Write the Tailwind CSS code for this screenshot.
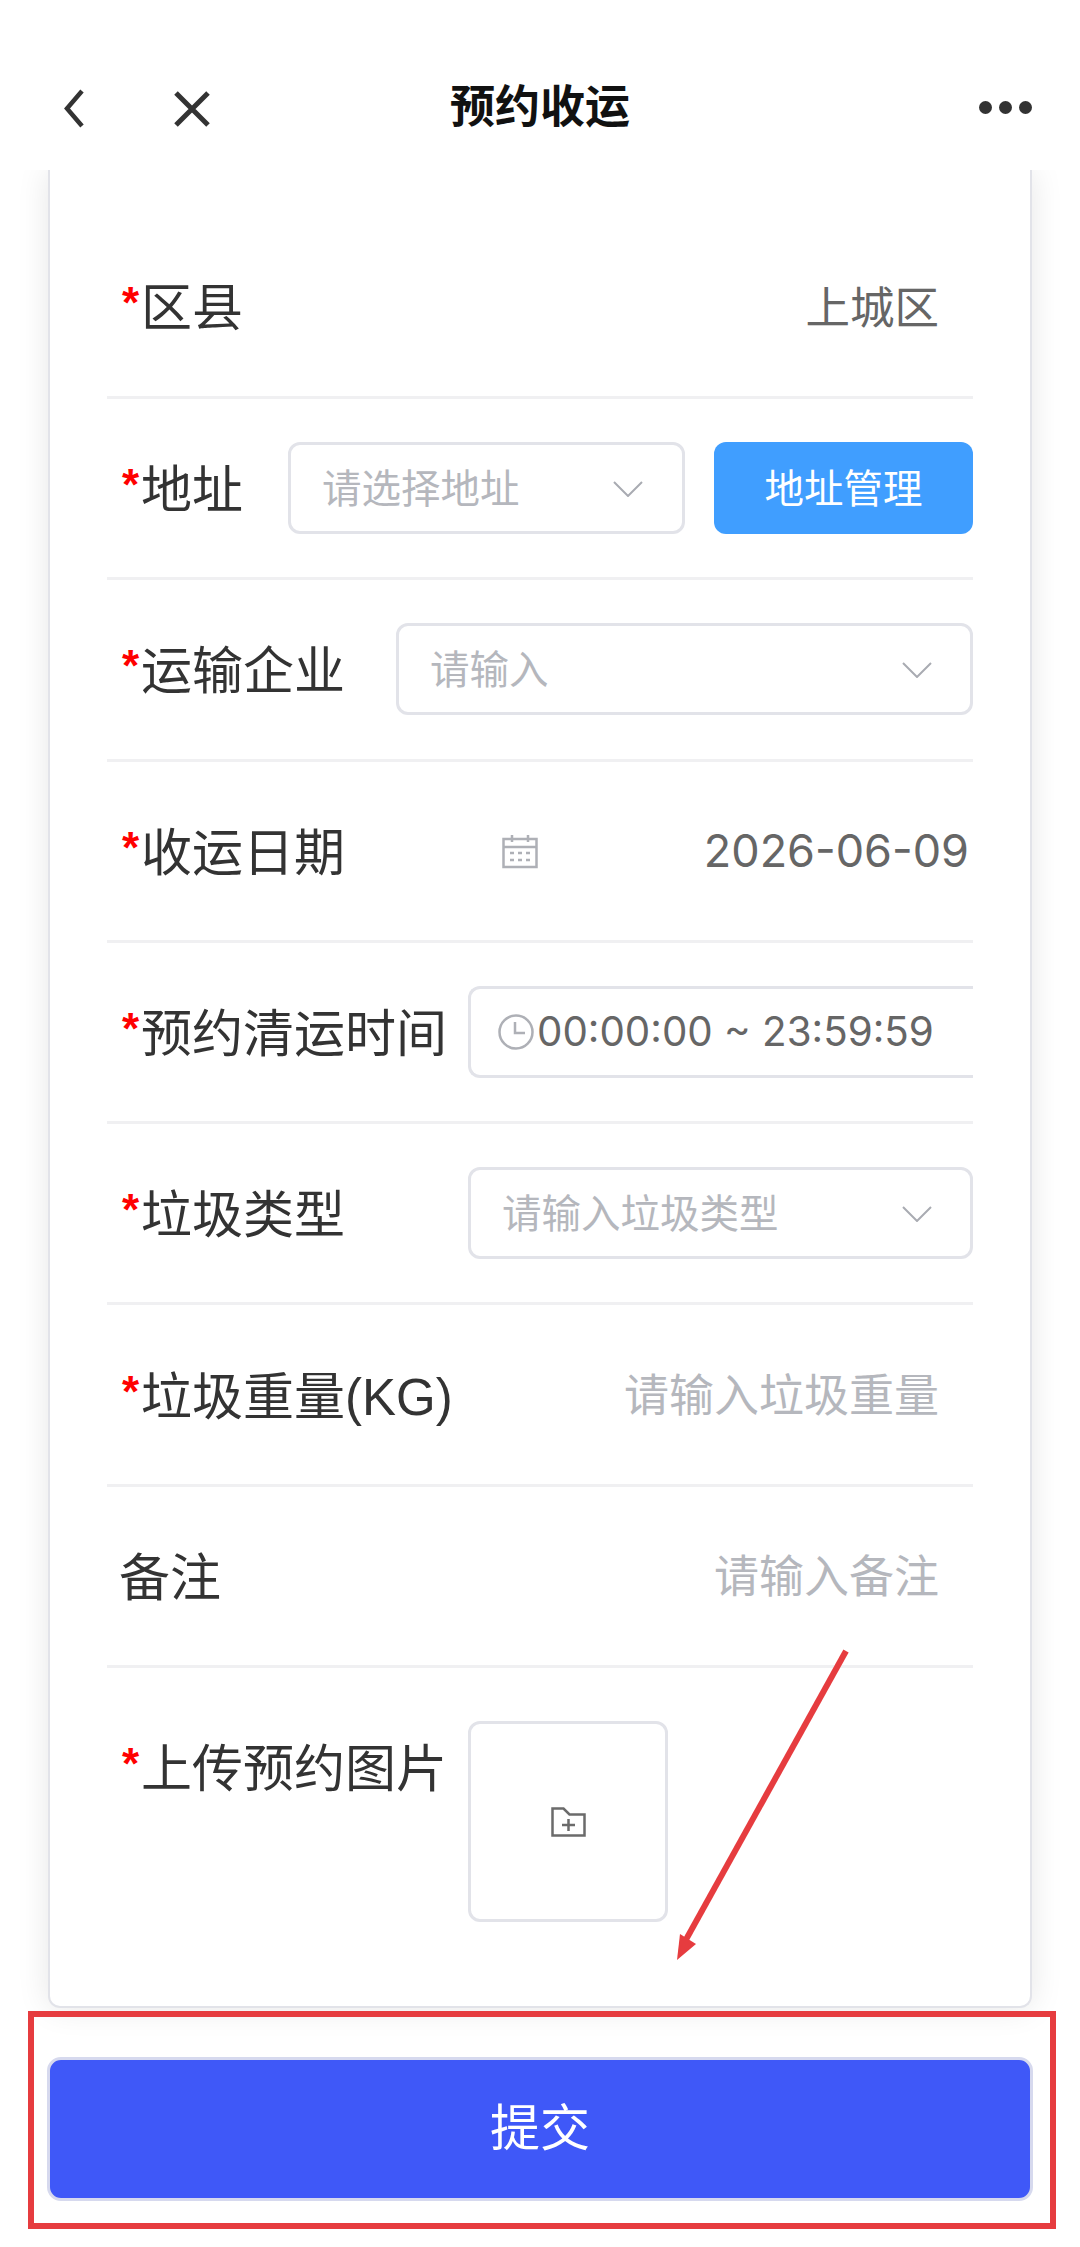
<!DOCTYPE html>
<html lang="zh-CN">
<head>
  <meta charset="UTF-8">
  <meta name="viewport" content="width=device-width, initial-scale=1.0">
  <title>预约收运</title>
  <script src="https://cdn.jsdelivr.net/npm/@tailwindcss/browser@4"></script>
</head>
<body class="bg-white">
  <div class="relative w-[1080px] h-[2247px] overflow-hidden bg-white text-[#333] font-['Liberation_Sans','Noto_Sans_CJK_SC',sans-serif]">

    <!-- nav bar -->
    <header class="relative z-10 h-[170px] bg-white flex items-end pb-[43px] pl-[63px] pr-[48px]">
      <svg class="w-[21px] h-[39px] mb-[-1px]" viewBox="0 0 21 39" fill="none" stroke="#333" stroke-width="4.5"><path d="M19 2 4 19.5 19 37"/></svg>
      <svg class="w-[36px] h-[36px] ml-[90px]" viewBox="0 0 36 36" fill="none" stroke="#333" stroke-width="5"><path d="M2 2l32 32M34 2 2 34"/></svg>
      <h1 class="absolute left-0 right-0 bottom-[32px] text-center text-[45px] leading-[60px] font-bold text-[#111]">预约收运</h1>
      <div class="ml-auto flex gap-[7px] mb-[13px]">
        <span class="w-[13px] h-[13px] rounded-full bg-[#333]"></span>
        <span class="w-[13px] h-[13px] rounded-full bg-[#333]"></span>
        <span class="w-[13px] h-[13px] rounded-full bg-[#333]"></span>
      </div>
    </header>

    <!-- form card -->
    <main class="mx-[48px] h-[1838px] px-[57px] bg-white border-x-2 border-b-2 border-[#e2e3e9] rounded-b-[12px] shadow-[0_0_32px_rgba(0,0,0,0.1)] flex flex-col text-[51px] leading-[60px]">
      <div class="h-[229px] pt-[46px] flex items-center justify-between pl-[15px] pr-[34px] border-b-[3px] border-[#f0f0f2]">
        <div class="flex pt-[6px]"><span class="w-[19px] text-[44px] font-bold text-[#f00] mt-[-6px]">*</span>区县</div>
        <div class="text-[44.5px] text-[#666] pt-[5px]">上城区</div>
      </div>

      <div class="h-[181.3px] flex items-center pl-[15px] border-b-[3px] border-[#f0f0f2]">
        <div class="w-[166px] shrink-0 flex pt-[6px]"><span class="w-[19px] text-[44px] font-bold text-[#f00] mt-[-6px]">*</span>地址</div>
        <div class="w-[397px] h-[92px] border-[3px] border-[#e2e3e9] rounded-[12px] flex items-center justify-between pl-[31px] pr-[39px] pt-[2px] text-[39.5px] text-[#b5b7bd]">
          请选择地址
          <svg class="w-[30px] h-[16px]" viewBox="0 0 30 16" fill="none" stroke="#a9abb2" stroke-width="2"><path d="M1 1l14 14L29 1"/></svg>
        </div>
        <div class="ml-[29px] w-[259px] h-[92px] rounded-[12px] bg-[#409eff] text-white text-[39.5px] pt-[2px] flex items-center justify-center">地址管理</div>
      </div>

      <div class="h-[181.3px] flex items-center pl-[15px] border-b-[3px] border-[#f0f0f2]">
        <div class="w-[274px] shrink-0 flex pt-[6px]"><span class="w-[19px] text-[44px] font-bold text-[#f00] mt-[-6px]">*</span>运输企业</div>
        <div class="flex-1 h-[92px] border-[3px] border-[#e2e3e9] rounded-[12px] flex items-center justify-between pl-[31px] pr-[38px] pt-[2px] text-[39.5px] text-[#b5b7bd]">
          请输入
          <svg class="w-[30px] h-[16px]" viewBox="0 0 30 16" fill="none" stroke="#a9abb2" stroke-width="2"><path d="M1 1l14 14L29 1"/></svg>
        </div>
      </div>

      <div class="h-[181.3px] flex items-center pl-[15px] pr-[4px] border-b-[3px] border-[#f0f0f2]">
        <div class="w-[380px] shrink-0 flex pt-[6px]"><span class="w-[19px] text-[44px] font-bold text-[#f00] mt-[-6px]">*</span>收运日期</div>
        <svg class="w-[36px] h-[36px]" viewBox="0 0 36 36" fill="none" stroke="#aeb0b6" stroke-width="2.5">
          <path d="M1.5 6h33v28h-33zM1.5 14h33M10 2v7M26 2v7"/>
          <path d="M8 20h4M16 20h4M24 20h4M8 27h4M16 27h4M24 27h4" stroke-width="2.5"/>
        </svg>
        <div class="ml-auto text-[45px] text-[#666] font-['Inter','Noto_Sans_CJK_SC',sans-serif]">2026-06-09</div>
      </div>

      <div class="h-[181.3px] flex items-center pl-[15px] border-b-[3px] border-[#f0f0f2]">
        <div class="w-[346px] shrink-0 whitespace-nowrap flex pt-[6px]"><span class="w-[19px] text-[44px] font-bold text-[#f00] mt-[-6px]">*</span>预约清运时间</div>
        <div class="flex-1 h-[92px] border-y-[3px] border-l-[3px] border-[#e2e3e9] rounded-l-[12px] flex items-center pl-[27px] text-[40.3px] text-[#666] font-['Inter','Noto_Sans_CJK_SC',sans-serif] whitespace-nowrap">
          <svg class="w-[36px] h-[36px] mr-[3px] shrink-0" viewBox="0 0 36 36" fill="none" stroke="#aeb0b6" stroke-width="2.5"><circle cx="18" cy="18" r="16.5"/><path d="M17 8v11h10"/></svg>
          00:00:00 ~ 23:59:59
        </div>
      </div>

      <div class="h-[181.3px] flex items-center pl-[15px] border-b-[3px] border-[#f0f0f2]">
        <div class="w-[346px] shrink-0 flex pt-[6px]"><span class="w-[19px] text-[44px] font-bold text-[#f00] mt-[-6px]">*</span>垃圾类型</div>
        <div class="flex-1 h-[92px] border-[3px] border-[#e2e3e9] rounded-[12px] flex items-center justify-between pl-[31px] pr-[38px] pt-[2px] text-[39.5px] text-[#b5b7bd]">
          请输入垃圾类型
          <svg class="w-[30px] h-[16px]" viewBox="0 0 30 16" fill="none" stroke="#a9abb2" stroke-width="2"><path d="M1 1l14 14L29 1"/></svg>
        </div>
      </div>

      <div class="h-[181.3px] flex items-center justify-between pl-[15px] pr-[34px] border-b-[3px] border-[#f0f0f2]">
        <div class="whitespace-nowrap flex pt-[6px]"><span class="w-[19px] text-[44px] font-bold text-[#f00] mt-[-6px]">*</span>垃圾重量(KG)</div>
        <div class="text-[45px] text-[#b5b7bd] pt-[5px]">请输入垃圾重量</div>
      </div>

      <div class="h-[181.3px] flex items-center justify-between pl-[12px] pr-[34px] border-b-[3px] border-[#f0f0f2]">
        <div class="pt-[6px]">备注</div>
        <div class="text-[45px] text-[#b5b7bd] pt-[5px]">请输入备注</div>
      </div>

      <div class="flex pt-[53px] pl-[15px]">
        <div class="w-[346px] shrink-0 whitespace-nowrap flex pt-[19px]"><span class="w-[19px] text-[44px] font-bold text-[#f00] mt-[-6px]">*</span>上传预约图片</div>
        <div class="w-[200px] h-[201px] border-[3px] border-[#e2e3e9] rounded-[12px] flex items-center justify-center">
          <svg class="w-[35px] h-[30px]" viewBox="0 0 35 30" fill="none" stroke="#6b6b6b" stroke-width="2.5"><path d="M1.5 1.5h11l6 6h15v21h-32zM17.5 12v12M11 18h13"/></svg>
        </div>
      </div>
    </main>

    <!-- submit -->
    <div class="relative z-10 mx-[47px] mt-[49px] h-[144px] rounded-[14px] border-[3px] border-[#d6d9ee] bg-[#3f58f8] text-white text-[50px] flex items-center justify-center">提交</div>

    <!-- red annotation drawn over the screenshot -->
    <svg class="absolute left-0 top-0 z-20 w-[1080px] h-[2247px] pointer-events-none" viewBox="0 0 1080 2247" fill="none">
      <path d="M846 1651 683 1945" stroke="#e63c3f" stroke-width="6"/>
      <path d="M677 1960l3-26 16 10z" fill="#e63c3f"/>
      <rect x="31" y="2014" width="1022" height="212" stroke="#e63c3f" stroke-width="6"/>
    </svg>
  </div>
</body>
</html>
